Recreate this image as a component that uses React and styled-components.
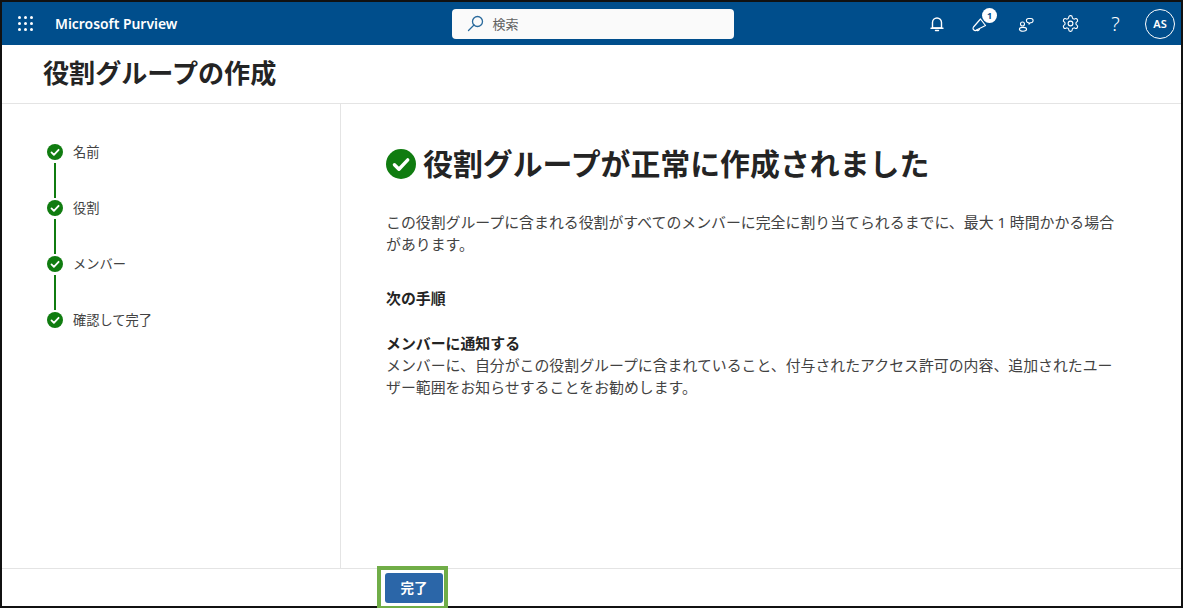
import React from "react";
import styled, { createGlobalStyle } from "styled-components";
import { LuSettings } from "react-icons/lu";

const GlobalStyle = createGlobalStyle`
  html, body {
    margin: 0;
    padding: 0;
    background: #ffffff;
  }
  * {
    box-sizing: border-box;
  }
`;

const Frame = styled.div`
  width: 1183px;
  height: 608px;
  display: flex;
  flex-direction: column;
  border: 2px solid #111111;
  background: #ffffff;
  color: #242424;
  font-family: "Noto Sans", "Noto Sans CJK JP", sans-serif;
`;

const TopBar = styled.header`
  height: 43px;
  flex: none;
  background: #004e8c;
  color: #ffffff;
  display: grid;
  grid-template-columns: 1fr 282px 1fr;
  align-items: center;
`;

const Brand = styled.div`
  display: flex;
  align-items: center;
  gap: 22px;
  padding-left: 16px;
  font-size: 13.9px;
  font-weight: 600;
`;

const Waffle = styled.div`
  display: grid;
  grid-template-columns: repeat(3, 3px);
  grid-auto-rows: 3px;
  gap: 3px;
  span {
    background: #ffffff;
    border-radius: 50%;
  }
`;

const SearchBox = styled.div`
  height: 30px;
  margin-left: 1px;
  margin-right: -1px;
  display: flex;
  align-items: center;
  gap: 9px;
  padding-left: 15px;
  background: #fafafa;
  border-radius: 4px;
  color: #616161;
  font-size: 13px;
`;

const Actions = styled.div`
  display: flex;
  align-items: center;
  justify-content: flex-end;
  padding-right: 6px;
`;

const ActionButton = styled.div`
  width: 45px;
  height: 43px;
  display: flex;
  align-items: center;
  justify-content: center;
  position: relative;
  font-size: 20px;
  font-weight: 300;
`;

const Badge = styled.span`
  position: absolute;
  top: 6px;
  right: 6px;
  width: 15px;
  height: 15px;
  border-radius: 50%;
  background: #ffffff;
  color: #004e8c;
  font-size: 9px;
  font-weight: 700;
  line-height: 15px;
  text-align: center;
`;

const Avatar = styled.div`
  width: 30px;
  height: 30px;
  margin-left: 7px;
  border: 1px solid #ffffff;
  border-radius: 50%;
  display: flex;
  align-items: center;
  justify-content: center;
  font-size: 11px;
  font-weight: 600;
`;

const TitleBar = styled.div`
  height: 59px;
  flex: none;
  display: flex;
  align-items: center;
  padding: 0 0 2px 41px;
  border-bottom: 1px solid #e4e4e4;
`;

const PageTitle = styled.h1`
  margin: 0;
  font-size: 26.1px;
  font-weight: 700;
  line-height: 1;
  color: #242424;
`;

const Body = styled.div`
  flex: 1;
  min-height: 0;
  display: flex;
`;

const Wizard = styled.nav`
  width: 339px;
  flex: none;
  padding: 40px 0 0 45px;
  border-right: 1px solid #e4e4e4;
`;

const Step = styled.div`
  display: flex;
  gap: 10px;
`;

const StepMarker = styled.div`
  width: 16px;
  display: flex;
  flex-direction: column;
  align-items: center;
`;

const StepLine = styled.div`
  width: 2px;
  height: 35px;
  margin: 3px 0 2px;
  background: #107c10;
`;

const StepLabel = styled.span`
  font-size: 13.25px;
  line-height: 16px;
  color: #424242;
`;

const Main = styled.main`
  flex: 1;
  padding: 40px 60px 0 45px;
`;

const SuccessHeading = styled.h2`
  margin: 0 0 27px;
  display: flex;
  align-items: center;
  gap: 7px;
  font-size: 29.9px;
  font-weight: 700;
  line-height: 40px;
  color: #242424;
`;

const Paragraph = styled.p`
  margin: 0;
  font-size: 14.9px;
  line-height: 22px;
  color: #424242;
`;

const SectionTitle = styled.h3`
  margin: ${(props) => (props.$tight ? "0" : "32px 0 23px")};
  font-size: 14.9px;
  font-weight: 700;
  line-height: 22px;
  color: #242424;
`;

const Footer = styled.footer`
  height: 38px;
  flex: none;
  border-top: 1px solid #e4e4e4;
  padding-left: 375px;
`;

const Highlight = styled.div`
  width: 71px;
  height: 44px;
  margin-top: -3px;
  border: 4px solid #70ad47;
  background: #ffffff;
  padding: 3px 1px 0 4px;
  position: relative;
`;

const PrimaryButton = styled.button`
  width: 100%;
  height: 30px;
  border: none;
  border-radius: 3px;
  background: #2b66a8;
  color: #ffffff;
  font-family: inherit;
  font-size: 13.5px;
  font-weight: 700;
  padding: 0 0 2px;
`;

const CheckSvg = styled.svg`
  flex: none;
`;

const BellSvg = styled.svg`
  margin-left: 3px;
`;

function CheckCircle({ size }) {
  return (
    <CheckSvg width={size} height={size} viewBox="0 0 32 32">
      <circle cx="16" cy="16" r="16" fill="#107c10" />
      <path d="M9 16.8l4.8 4.8L23.2 11.6" fill="none" stroke="#fff" strokeWidth="3.6" strokeLinecap="round" strokeLinejoin="round" />
    </CheckSvg>
  );
}

function SearchIcon() {
  return (
    <svg width="17" height="17" viewBox="0 0 17 17" fill="none" stroke="#2a6a9c" strokeWidth="1.3">
      <circle cx="10.500" cy="6.500" r="5" />
      <path d="M7 10L1.500 15.500" strokeLinecap="round" />
    </svg>
  );
}

function BellIcon() {
  return (
    <BellSvg width="16" height="16" viewBox="0 0 16 16" fill="none" stroke="#fff" strokeWidth="1.4">
      <path d="M3.500 12V6.500a4.500 4.500 0 0 1 9 0V12z" strokeLinejoin="round" />
      <path d="M2 12.300h12M6.500 14.500h3" strokeLinecap="round" />
    </BellSvg>
  );
}

function MegaphoneIcon() {
  return (
    <svg width="20" height="20" viewBox="0 0 20 20" fill="none" stroke="#fff" strokeWidth="1.2">
      <path d="M2.500 13L9.500 5l5 6.500-8.500 4.200a2 2 0 0 1-3.500-2.700z" strokeLinejoin="round" />
      <path d="M8.500 14.500a2 2 0 0 1-3.400 1.500" />
    </svg>
  );
}

function PeopleChatIcon() {
  return (
    <svg width="16" height="16" viewBox="0 0 16 16" fill="none" stroke="#fff" strokeWidth="1.1">
      <circle cx="4.500" cy="8" r="2" />
      <ellipse cx="5" cy="13.300" rx="3.600" ry="1.900" />
      <path d="M10.500 2.500h2.500a2 2 0 0 1 0 4.200h-.6l-1.400 1.400V6.700h-.5a2.100 2.100 0 0 1 0-4.200z" strokeLinejoin="round" />
    </svg>
  );
}

const steps = ["名前", "役割", "メンバー", "確認して完了"];

export default function App() {
  return (
    <>
      <GlobalStyle />
      <Frame>
        <TopBar>
          <Brand>
            <Waffle>
              {Array.from({ length: 9 }).map((_, i) => (
                <span key={i} />
              ))}
            </Waffle>
            Microsoft Purview
          </Brand>
          <SearchBox>
            <SearchIcon />
            検索
          </SearchBox>
          <Actions>
            <ActionButton>
              <BellIcon />
            </ActionButton>
            <ActionButton>
              <MegaphoneIcon />
              <Badge>1</Badge>
            </ActionButton>
            <ActionButton>
              <PeopleChatIcon />
            </ActionButton>
            <ActionButton>
              <LuSettings size={19} strokeWidth={1.4} />
            </ActionButton>
            <ActionButton>?</ActionButton>
            <Avatar>AS</Avatar>
          </Actions>
        </TopBar>
        <TitleBar>
          <PageTitle>役割グループの作成</PageTitle>
        </TitleBar>
        <Body>
          <Wizard>
            {steps.map((label, i) => (
              <Step key={label}>
                <StepMarker>
                  <CheckCircle size={16} />
                  {i < steps.length - 1 && <StepLine />}
                </StepMarker>
                <StepLabel>{label}</StepLabel>
              </Step>
            ))}
          </Wizard>
          <Main>
            <SuccessHeading>
              <CheckCircle size={30} />
              役割グループが正常に作成されました
            </SuccessHeading>
            <Paragraph>
              この役割グループに含まれる役割がすべてのメンバーに完全に割り当てられるまでに、最大 1 時間かかる場合があります。
            </Paragraph>
            <SectionTitle>次の手順</SectionTitle>
            <SectionTitle as="h4" $tight>
              メンバーに通知する
            </SectionTitle>
            <Paragraph>
              メンバーに、自分がこの役割グループに含まれていること、付与されたアクセス許可の内容、追加されたユーザー範囲をお知らせすることをお勧めします。
            </Paragraph>
          </Main>
        </Body>
        <Footer>
          <Highlight>
            <PrimaryButton>完了</PrimaryButton>
          </Highlight>
        </Footer>
      </Frame>
    </>
  );
}
